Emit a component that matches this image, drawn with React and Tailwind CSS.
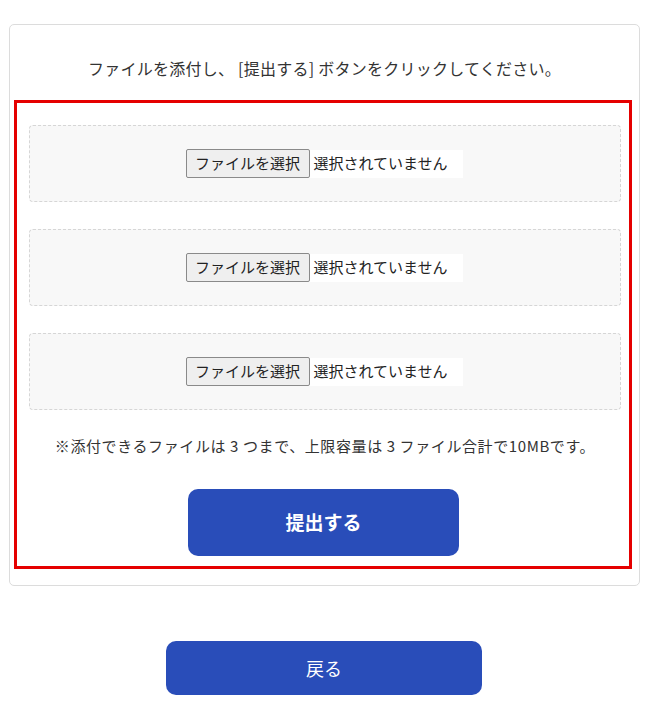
import React from "react";

const font = { fontFamily: '"Noto Sans CJK JP", "Noto Sans", sans-serif' };

const FileField = () => {
  return (
    <div className="h-[77px] flex items-center justify-center rounded-[4px] border border-dashed border-[#d6d6d6] bg-[#f8f8f8]">
      <div className="flex items-center pr-[2px]">
        <span className="h-[29px] w-[124px] flex items-center justify-center rounded-[2px] border border-[#8a8a8a] bg-[#efefef] text-[15px] text-[#222]">
          ファイルを選択
        </span>
        <span className="h-[28px] w-[153px] flex items-center pl-[4px] bg-white text-[15px] text-[#222]">
          選択されていません
        </span>
      </div>
    </div>
  );
};

export default function App() {
  return (
    <div className="min-h-[721px] w-[652px] bg-white pt-[24px] px-[9px]" style={font}>
      <div className="w-[631px] h-[562px] rounded-[5px] border border-[#dcdcdc] bg-white">
        <p className="pt-[32px] text-center text-[16px] tracking-[0.25px] leading-[22px] text-[#333]">
          ファイルを添付し、 [提出する] ボタンをクリックしてください。
        </p>
        <div className="mt-[21px] ml-[4px] w-[618px] border-[3px] border-[#e50000] pt-[22px] pl-[12px] pr-[8px] pb-[10px]">
          <div className="flex flex-col gap-[27px]">
            <FileField />
            <FileField />
            <FileField />
          </div>
          <p className="mt-[25px] text-center text-[15px] tracking-[0.6px] leading-[22px] text-[#333]">
            ※添付できるファイルは 3 つまで、上限容量は 3 ファイル合計で10MBです。
          </p>
          <div className="mt-[32px] flex justify-center pr-[3px]">
            <button className="w-[271px] h-[67px] rounded-[10px] bg-[#294db9] text-[19px] font-bold text-white">
              提出する
            </button>
          </div>
        </div>
      </div>
      <div className="mt-[55px] flex justify-center pr-[4px]">
        <button className="w-[316px] h-[54px] rounded-[10px] bg-[#294db9] text-[18px] text-white">
          戻る
        </button>
      </div>
    </div>
  );
}
